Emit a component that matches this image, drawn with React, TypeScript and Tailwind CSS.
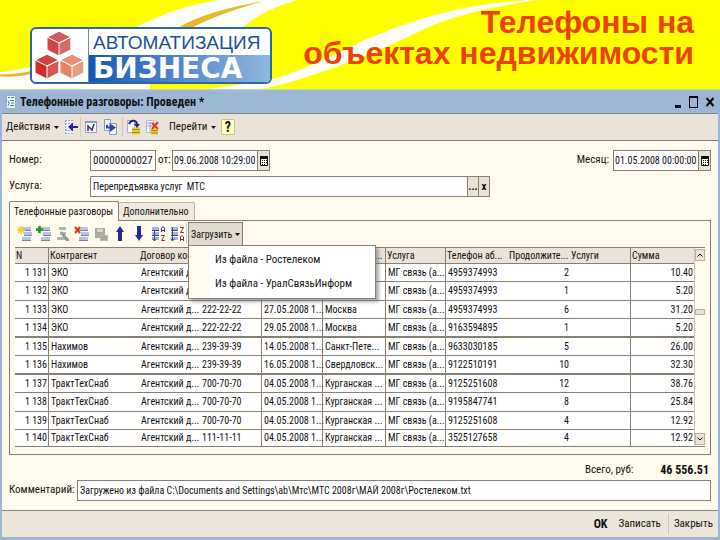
import type { ReactNode } from 'react';

const columns = [
  { title: 'N', width: 'w-[34px]' },
  { title: 'Контрагент', width: 'w-[90px]' },
  { title: 'Договор кон...', width: 'w-[61px]' },
  { title: 'Телефон', width: 'w-[62px]' },
  { title: 'Дата', width: 'w-[61px]' },
  { title: 'Направлени...', width: 'w-[63px]' },
  { title: 'Услуга', width: 'w-[60px]' },
  { title: 'Телефон аб...', width: 'w-[62px]' },
  { title: 'Продолжите...', width: 'w-[62px]' },
  { title: 'Услуги', width: 'w-[61px]' },
  { title: 'Сумма', width: 'w-[63px]' },
];

const calls = [
  ['1 131', 'ЭКО', 'Агентский д...', '222-22-22', '27.05.2008 1...', 'Москва', 'МГ связь (а...', '4959374993', '2', '', '10.40'],
  ['1 132', 'ЭКО', 'Агентский д...', '222-22-22', '27.05.2008 1...', 'Москва', 'МГ связь (а...', '4959374993', '1', '', '5.20'],
  ['1 133', 'ЭКО', 'Агентский д...', '222-22-22', '27.05.2008 1...', 'Москва', 'МГ связь (а...', '4959374993', '6', '', '31.20'],
  ['1 134', 'ЭКО', 'Агентский д...', '222-22-22', '29.05.2008 1...', 'Москва', 'МГ связь (а...', '9163594895', '1', '', '5.20'],
  ['1 135', 'Нахимов', 'Агентский д...', '239-39-39', '14.05.2008 1...', 'Санкт-Пете...', 'МГ связь (а...', '9633030185', '5', '', '26.00'],
  ['1 136', 'Нахимов', 'Агентский д...', '239-39-39', '16.05.2008 1...', 'Свердловск...', 'МГ связь (а...', '9122510191', '10', '', '32.30'],
  ['1 137', 'ТрактТехСнаб', 'Агентский д...', '700-70-70', '04.05.2008 1...', 'Курганская ...', 'МГ связь (а...', '9125251608', '12', '', '38.76'],
  ['1 138', 'ТрактТехСнаб', 'Агентский д...', '700-70-70', '04.05.2008 1...', 'Курганская ...', 'МГ связь (а...', '9195847741', '8', '', '25.84'],
  ['1 139', 'ТрактТехСнаб', 'Агентский д...', '700-70-70', '04.05.2008 1...', 'Курганская ...', 'МГ связь (а...', '9125251608', '4', '', '12.92'],
  ['1 140', 'ТрактТехСнаб', 'Агентский д...', '111-11-11', '04.05.2008 1...', 'Курганская ...', 'МГ связь (а...', '3525127658', '4', '', '12.92'],
];

const rightAligned = [0, 8, 10];
const headLines = [0, 5, 6, 9];
const bodyLines = [0, 3, 4, 5, 6, 9];

function Swoosh() {
  return (
    <svg viewBox="0 0 720 90" preserveAspectRatio="none" className="absolute inset-0 h-full w-full" aria-hidden="true">
      <path d="M0 73 Q60 66 137 27 Q180 5 220 0 H298 Q262 10 244 27 L150 84 V90 H0Z" fill="#fffffa" />
      <path d="M0 75 Q20 76 50 67 L50 69 Q20 80 0 77Z" fill="#e8b82c" />
      <path d="M178 28 Q206 11 264 1 Q218 14 192 28Z" fill="#e8b82c" />
      <path d="M205 90 Q255 84 280 78 Q315 65 345 50 Q440 2 538 0 Q455 12 415 34 Q345 68 280 86 L262 90Z" fill="#fffffa" />
    </svg>
  );
}

function Cube({ x, y, fill }: { x: number; y: number; fill: string }) {
  return (
    <g transform={`translate(${x} ${y})`} stroke="#fff" strokeWidth="1">
      <path d="M12 0 24 6 24 19 12 25 0 19 0 6Z" fill={fill} />
      <path d="M12 0 24 6 12 12 0 6Z" fill="#fff" fillOpacity="0.1" />
      <path d="M12 12 24 6 24 19 12 25Z" fill="#fff" fillOpacity="0.2" />
    </g>
  );
}

function Logo() {
  return (
    <div className="relative flex h-[57px] w-[242px] overflow-hidden rounded-md border-2 border-[#2b6a9c] bg-white">
      <div className="w-[57px] border-r border-[#6a8cae]">
        <svg viewBox="0 0 56 53" className="h-[53px] w-[56px]" aria-hidden="true">
          <Cube x={15} y={2} fill="#cf4743" />
          <Cube x={3} y={25} fill="#cc2c2a" />
          <Cube x={28} y={25} fill="#e28468" />
        </svg>
      </div>
      <div className="flex flex-1 flex-col">
        <div className="h-[26px] pl-1 font-['Liberation_Sans'] text-[19px] leading-[28px] text-[#1c4fa0]">АВТОМАТИЗАЦИЯ</div>
        <div className="flex-1 bg-linear-to-r from-[#1355b5] to-[#8fb8de] pl-1 font-['DejaVu_Sans'] text-[28px] leading-[28px] font-bold text-white">БИЗНЕСА</div>
      </div>
    </div>
  );
}

function ToolButton({ label, children }: { label: string; children: ReactNode }) {
  return (
    <button type="button" aria-label={label} className="flex h-5 w-[19px] items-center justify-center">
      <svg viewBox="0 0 16 16" className="h-4 w-4" fill="none" aria-hidden="true">
        {children}
      </svg>
    </button>
  );
}

function Caret() {
  return (
    <svg viewBox="0 0 5 3" className="h-[3px] w-[5px] shrink-0" aria-hidden="true">
      <path d="M0 0H5L2.500 3Z" fill="#111" />
    </svg>
  );
}

function Separator() {
  return <span className="h-5 w-px bg-[#cfc8bb]" />;
}

// stacked rows shared by the list icons
function Rows() {
  return (
    <>
      <path d="M5 1H14V4H5ZM7 6H15V9H7ZM5 11H14V14H5Z" fill="#b7c2e4" />
      <path d="M5 4.500H14M7 9.500H15M5 14.500H14" stroke="#7482b4" />
    </>
  );
}

function CalendarButton({ label }: { label: string }) {
  return (
    <button type="button" aria-label={label} className="flex w-3 items-center justify-center border-l border-[#857f74] bg-[#e9e2d6]">
      <svg viewBox="0 0 8 10" className="h-[10px] w-2" aria-hidden="true">
        <path d="M.5 .5H7.500V9.500H.5Z" fill="#fff" stroke="#111" />
        <path d="M0 0H8V3H0Z" fill="#111" />
        <path d="M2 4H3V5H2ZM4 4H5V5H4ZM2 6H3V7H2ZM4 6H5V7H4ZM6 4H7V5H6ZM6 6H7V7H6ZM2 8H3V9H2ZM4 8H5V9H4Z" fill="#111" />
      </svg>
    </button>
  );
}

function CallsTable() {
  return (
    <div className="flex border-y border-[#857f74] text-[10px]">
      <table className="w-full flex-1 table-fixed border-separate border-spacing-0 bg-white">
        <colgroup>
          {columns.map(c => (
            <col key={c.title} className={c.width} />
          ))}
        </colgroup>
        <thead>
          <tr className="bg-[#ebe3da]">
            {columns.map((c, i) => (
              <th
                key={c.title}
                scope="col"
                className={`h-4 border-b border-[#857f74] p-0 pl-px text-left leading-[14px] font-normal whitespace-nowrap ${headLines.includes(i) ? 'border-r' : ''}`}
              >
                {c.title}
              </th>
            ))}
          </tr>
        </thead>
        <tbody>
          {calls.map((call, r) => (
            <tr key={call[0]}>
              {call.map((cell, i) => (
                <td
                  key={i}
                  className={`border-[#857f74] p-0 pr-px leading-4 whitespace-nowrap ${r === 9 ? 'h-4' : r % 2 ? 'h-[19px]' : 'h-[18px]'} ${r === 9 ? '' : r === 3 || r === 5 ? 'border-b-2' : 'border-b'} ${bodyLines.includes(i) ? 'border-r' : ''} ${rightAligned.includes(i) ? 'text-right' : 'pl-[2px]'}`}
                >
                  {cell}
                </td>
              ))}
            </tr>
          ))}
        </tbody>
      </table>
      <div className="flex w-3 flex-col items-center justify-between border-l border-[#cfc8bb] pt-px pb-px">
        <button type="button" aria-label="Вверх" className="flex h-3 w-[10px] items-center justify-center border border-[#b9b2a5] bg-[#ebe3da]">
          <svg viewBox="0 0 6 4" className="h-1 w-[6px]" fill="none" stroke="#111"><path d="M.5 3.500 3 1 5.500 3.500" /></svg>
        </button>
        <span className="mb-[70px] h-[6px] w-[10px] border border-[#b9b2a5] bg-[#ebe3da]" />
        <button type="button" aria-label="Вниз" className="flex h-3 w-[10px] items-center justify-center border border-[#b9b2a5] bg-[#ebe3da]">
          <svg viewBox="0 0 6 4" className="h-1 w-[6px]" fill="none" stroke="#111"><path d="M.5 .5 3 3 5.500 .5" /></svg>
        </button>
      </div>
    </div>
  );
}

export default function App() {
  return (
    <div className="min-h-screen bg-[#9cb6d6] font-['Roboto_Condensed','Liberation_Sans_Narrow',sans-serif] text-[11px] whitespace-nowrap text-[#111]">
      <header className="relative flex h-[90px] items-start justify-between overflow-hidden border-b border-[#c3dfa8] bg-[#ffff00] pt-[7px] pr-[26px] pl-[30px]">
        <Swoosh />
        <div className="relative pt-5">
          <Logo />
        </div>
        <h1 className="relative text-right font-['Liberation_Sans',sans-serif] text-[32px] leading-[31px] font-bold text-[#ee3f05]">
          Телефоны на
          <br />
          объектах недвижимости
        </h1>
      </header>

      <main className="border-x-2 border-b-3 border-[#9cb6d6] bg-[#fffbef]">
        <div className="flex h-6 items-center border-b border-[#7f858c] bg-[#9cb6d6] pr-1 pl-1">
          <svg viewBox="0 0 10 14" className="h-[14px] w-[10px]" aria-hidden="true">
            <path d="M.5 .5H9.500V13.500H.5Z" fill="#f4fbff" stroke="#8bb4c4" />
            <path d="M2 2.500H4M5 2.500H8M4 5.500H8M4 10.500H8M2 5.500 3 8.500 2 10.500M5 8H8" stroke="#3d7f9a" fill="none" />
          </svg>
          <h2 className="flex-1 pl-1 text-[12px] font-bold">Телефонные разговоры: Проведен *</h2>
          <div className="flex items-center gap-2">
            <button type="button" aria-label="Свернуть" className="flex h-3 w-[6px] items-end"><span className="h-[3px] w-full bg-black" /></button>
            <button type="button" aria-label="Развернуть" className="h-3 w-[9px] border border-t-2 border-black" />
            <button type="button" aria-label="Закрыть окно" className="h-3 w-2">
              <svg viewBox="0 0 8 12" className="h-3 w-2" stroke="#000" strokeWidth="2"><path d="M.5 2 7.500 10M7.500 2 .5 10" /></svg>
            </button>
          </div>
        </div>

        <div className="flex h-[27px] items-center border-b border-[#857f74] bg-[#ebe3da] pl-1">
          <button type="button" className="flex w-[55px] items-center gap-1">Действия <Caret /></button>
          <ToolButton label="Перейти к списку">
            <path d="M2 .5H10V15.500H2Z" fill="#f7f7ff" />
            <path d="M2 1.500H10M2 4.500H10M2 11.500H10M2 14.500H10M2.500 1V15" stroke="#9aa4cc" strokeDasharray="2 1" />
            <path d="M5 8 10 3.500V7H15V9H10V12.500Z" fill="#25209c" />
          </ToolButton>
          <Separator />
          <ToolButton label="Обновить">
            <path d="M2.500 2.500H13.500V13.500H2.500Z" fill="#fff" stroke="#8aa6c8" />
            <path d="M2 3H14" stroke="#76a2c8" strokeWidth="2" />
            <path d="M5 12V7L9 11 11 5" stroke="#2a2a90" strokeWidth="1.500" />
            <path d="M5 12V6" stroke="#c43030" />
          </ToolButton>
          <ToolButton label="Скопировать">
            <path d="M2.500 .5H8.500V11.500H2.500ZM7.500 4.500H14.500V15.500H7.500Z" fill="#f4f6ff" stroke="#8f9cc4" />
            <path d="M4 6V9.500H8V13L14 8.500 8 4.500V7.500H6V6Z" fill="#3346a8" />
          </ToolButton>
          <span className="ml-[3px] flex"><Separator /></span>
          <ToolButton label="Провести">
            <path d="M2.500 1.500H9.500V13.500H2.500Z" fill="#fff" stroke="#a4b0cc" />
            <path d="M7 8.500H15V15.500H7Z" fill="#e9cf35" />
            <path d="M7 10.500H15M7 13.500H15" stroke="#a68a10" />
            <path d="M4 5C6 0 12 1 12 6" stroke="#24209c" strokeWidth="2" />
            <path d="M9 5H15L12 9Z" fill="#24209c" />
          </ToolButton>
          <ToolButton label="Отменить проведение">
            <path d="M2.500 1.500H9.500V13.500H2.500Z" fill="#fff" stroke="#b8b8c4" />
            <path d="M3 4H9M3 7H9M6 3V13" stroke="#9aa4b8" />
            <path d="M7 9.500H14V15.500H7Z" fill="#e9cf35" />
            <path d="M7 11.500H14M7 14H14" stroke="#a68a10" />
            <path d="M8 4 14 10M14 3 8 10" stroke="#e03a20" strokeWidth="2" />
          </ToolButton>
          <button type="button" className="flex w-[60px] items-center gap-1 pl-2">Перейти <Caret /></button>
          <button type="button" aria-label="Справка" className="h-4 w-[14px] rounded-xs border border-[#c8c27e] bg-[#ffffc4] text-[14px] leading-[14px] font-bold">?</button>
        </div>

        <div className="px-[7px] pt-[9px] pb-[9px]">
          <div className="flex h-[21px] items-center">
            <label htmlFor="number" className="w-[81px]">Номер:</label>
            <input id="number" defaultValue="00000000027" className="h-[21px] w-[66px] border border-[#857f74] bg-white pl-[2px]" />
            <label htmlFor="date" className="w-4 pl-[2px]">от:</label>
            <div className="flex h-[21px] w-[98px] border border-[#857f74]">
              <input id="date" defaultValue="09.06.2008 10:29:00" className="min-w-0 flex-1 bg-white pl-px text-[10px]" />
              <CalendarButton label="Выбрать дату" />
            </div>
            <label htmlFor="month" className="ml-auto pr-1">Месяц:</label>
            <div className="flex h-[21px] w-[98px] border border-[#857f74]">
              <input id="month" defaultValue="01.05.2008 00:00:00" className="min-w-0 flex-1 bg-white pl-px text-[10px]" />
              <CalendarButton label="Выбрать месяц" />
            </div>
          </div>

          <div className="mt-[5px] flex h-[21px] items-center">
            <label htmlFor="service" className="w-[81px]">Услуга:</label>
            <div className="flex h-[21px] w-[400px] border border-[#857f74]">
              <input id="service" defaultValue="Перепредъявка услуг  МТС" className="min-w-0 flex-1 bg-white pl-[2px] text-[10px]" />
              <button type="button" aria-label="Выбрать услугу" className="w-[11px] border-l border-[#857f74] bg-[#e9e2d6] leading-3 font-bold">...</button>
              <button type="button" aria-label="Очистить" className="w-[11px] border-l border-[#857f74] bg-[#e9e2d6] leading-3 font-bold">x</button>
            </div>
          </div>

          <div role="tablist" className="mt-1 -mb-px flex h-5 items-end">
            <button type="button" role="tab" aria-selected="true" className="relative h-5 w-[110px] rounded-t-xs border border-b-0 border-[#857f74] bg-[#fffbef] pl-1 text-left text-[10px]">Телефонные разговоры</button>
            <button type="button" role="tab" aria-selected="false" className="mb-px h-[18px] w-[76px] rounded-t-xs border border-b-0 border-l-0 border-[#bdb6a8] bg-[#f0eade] pl-1 text-left text-[10px]">Дополнительно</button>
          </div>

          <section className="border border-[#857f74] px-[5px] pb-[7px]">
            <div className="flex h-[26px] items-center">
              <ToolButton label="Добавить"><Rows /><path d="M4 0V8M0 4H8M1 1 7 7M7 1 1 7" stroke="#f0cf30" strokeWidth="1.500" /></ToolButton>
              <ToolButton label="Добавить копированием"><Rows /><path d="M3.500 0V7M0 3.500H7" stroke="#189a28" strokeWidth="2.500" /></ToolButton>
              <ToolButton label="Изменить">
                <path d="M4 1H11V4H4ZM5 6H11V9H5ZM2 11H10V14H2Z" fill="#aeb6ae" />
                <path d="M6 5 14 13V15H11L5 7Z" fill="#91a196" />
              </ToolButton>
              <ToolButton label="Удалить"><Rows /><path d="M1 1 6 7M6 1 1 7" stroke="#e0341c" strokeWidth="2" /></ToolButton>
              <ToolButton label="Сохранить">
                <path d="M2 2H12V12H2Z" fill="#aaa9a0" />
                <path d="M4 3H10V6H4Z" fill="#d7d5cc" />
                <path d="M7 9H15V15H7Z" fill="#bab8ae" />
                <path d="M8 11H14M8 13H14" stroke="#8f8d86" />
              </ToolButton>
              <ToolButton label="Переместить вверх"><path d="M8 0 12 6H10V15H6V6H4Z" fill="#252b9c" /></ToolButton>
              <ToolButton label="Переместить вниз"><path d="M8 15 12 9H10V0H6V9H4Z" fill="#252b9c" /></ToolButton>
              <ToolButton label="Сортировать по возрастанию">
                <path d="M2 1H9V4H2ZM2 6H9V9H2ZM2 11H9V14H2Z" fill="#a9b6dc" />
                <path d="M2 4.500H9M2 9.500H9M4.500 5V15M2.500 12.500 4.500 15 6.500 12.500" stroke="#36488c" />
                <path d="M11.500 6V2L13 .5 14.500 2V6M11.500 4.500H14.500" stroke="#3b3b9c" />
                <path d="M11 9.500H14.500L11.500 14.500H15" stroke="#a02850" />
              </ToolButton>
              <ToolButton label="Сортировать по убыванию">
                <path d="M2 1H9V4H2ZM2 6H9V9H2ZM2 11H9V14H2Z" fill="#a9b6dc" />
                <path d="M2 4.500H9M2 9.500H9M3.500 1V15M1.500 12.500 3.500 15 5.500 12.500" stroke="#36488c" />
                <path d="M11 1.500H14.500L11.500 6.500H15" stroke="#b02840" />
                <path d="M11.500 15V11L13 9.500 14.500 11V15M11.500 13.500H14.500" stroke="#80285c" />
              </ToolButton>
              <span className="mr-px flex"><Separator /></span>
              <div className="relative">
                <button type="button" aria-haspopup="menu" aria-expanded="true" className="flex h-6 w-[55px] items-center justify-between border border-[#857f74] bg-[#e0dbce] px-[2px] text-[10px]">
                  Загрузить <Caret />
                </button>
                <div role="menu" className="absolute top-[23px] left-0 z-10 flex w-[188px] flex-col border border-l-[21px] border-[#857f74] border-l-[#fffbef] bg-white py-[2px] shadow-[3px_3px_3px_#77777799] outline outline-[#857f74] -outline-offset-1">
                  <button type="button" role="menuitem" className="h-6 pl-[6px] text-left">Из файла - Ростелеком</button>
                  <button type="button" role="menuitem" className="h-6 pl-[6px] text-left">Из файла - УралСвязьИнформ</button>
                </div>
              </div>
            </div>
            <CallsTable />
          </section>

          <div className="flex h-[25px] items-center justify-end gap-[27px] pt-[5px] pr-[2px]">
            <span>Всего, руб:</span>
            <output className="text-[12px] font-bold">46 556.51</output>
          </div>

          <div className="flex items-center">
            <label htmlFor="comment" className="w-[68px]">Комментарий:</label>
            <input
              id="comment"
              defaultValue="Загружено из файла C:\Documents and Settings\ab\Мтс\МТС 2008г\МАЙ 2008г\Ростелеком.txt"
              className="h-[21px] min-w-0 flex-1 border border-[#857f74] bg-white pl-[2px] text-[10px]"
            />
          </div>
        </div>

        <footer className="flex h-[27px] items-center justify-end border-t border-[#857f74] bg-[#ebe5da] pr-[5px]">
          <button type="button" className="text-[12px] font-bold">OK</button>
          <button type="button" className="ml-1 px-[7px]">Записать</button>
          <Separator />
          <button type="button" className="pl-[5px]">Закрыть</button>
        </footer>
      </main>
    </div>
  );
}
